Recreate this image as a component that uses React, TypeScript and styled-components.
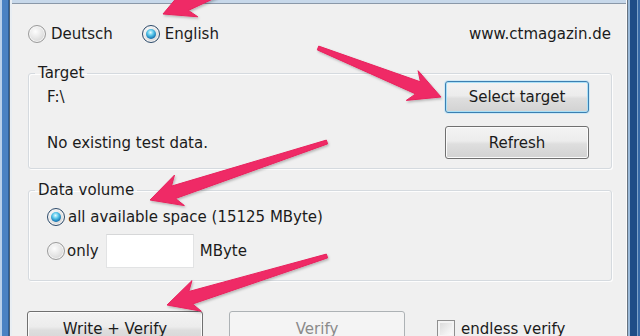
import React from "react";
import styled, { createGlobalStyle } from "styled-components";

const GlobalStyle = createGlobalStyle`
    html, body {
        margin: 0;
        padding: 0;
        background: #f0f0f0;
    }
    body {
        font-family: "DejaVu Sans", "Noto Sans", sans-serif;
        font-size: 15px;
        color: #1b1b1b;
    }
`;

// annotation arrows drawn over the dialog (Skitch style)
type Pt = [number, number];

const arrowPoints = (tail: Pt, tip: Pt, headLen = 31, headHalf = 16, w0 = 4, w1 = 13) => {
    const dx = tip[0] - tail[0];
    const dy = tip[1] - tail[1];
    const len = Math.hypot(dx, dy);
    const d = [dx / len, dy / len];
    const n = [-d[1], d[0]];
    const join = [tip[0] - d[0] * headLen * 0.8, tip[1] - d[1] * headLen * 0.8];
    const back = [tip[0] - d[0] * headLen, tip[1] - d[1] * headLen];
    const p = (b: number[], s: number) => `${(b[0] + n[0] * s).toFixed(1)},${(b[1] + n[1] * s).toFixed(1)}`;
    return [
        p(tail, w0 / 2),
        p(join, w1 / 2),
        p(back, headHalf),
        `${tip[0]},${tip[1]}`,
        p(back, -headHalf),
        p(join, -w1 / 2),
        p(tail, -w0 / 2),
    ].join(" ");
};

const arrows: { tail: Pt; tip: Pt }[] = [
    { tail: [292, -40], tip: [163, 14] },
    { tail: [318, 48], tip: [441, 97] },
    { tail: [327, 142], tip: [150, 200] },
    { tail: [327, 256], tip: [167, 305] },
];

const Stage = styled.div`
    position: relative;
    width: 640px;
    height: 336px;
    overflow: hidden;
`;

const Overlay = styled.svg`
    position: absolute;
    left: 0;
    top: 0;
    pointer-events: none;
`;

const Frame = styled.div`
    display: flex;
    height: 336px;
    background: #c7d8ea;
`;

const LeftEdge = styled.div`
    width: 12px;
    flex: none;
    background: linear-gradient(
        to right,
        #b9d0ea 0 2px,
        #4a82c3 2px 8px,
        #2d5f9a 8px 9px,
        #4f6478 9px 10px,
        #e9eef3 10px 12px
    );
`;

const RightEdge = styled.div`
    width: 14px;
    flex: none;
    background: linear-gradient(
        to right,
        #fbfbfb 0 1px,
        #66727f 1px 2px,
        #9bbad9 2px 4px,
        #1f4d87 4px 11px,
        #7fa3c9 11px 12px,
        #3769a6 12px 14px
    );
`;

const Client = styled.div`
    flex: 1;
    display: flex;
    flex-direction: column;
    margin-top: 3px;
    border-top: 1px solid #8a98a8;
    padding: 22px 14px 0 16px;
    background: #f0f0f0;
`;

const TopRow = styled.div`
    display: flex;
    align-items: center;
    height: 16px;
`;

const Choice = styled.label<{ $gap?: number; $last?: boolean }>`
    display: flex;
    align-items: center;
    gap: ${(p) => p.$gap ?? 5}px;
    margin-right: ${(p) => (p.$last ? 0 : 29)}px;
    white-space: nowrap;
`;

const Radio = styled.span<{ $on?: boolean }>`
    position: relative;
    width: 18px;
    height: 18px;
    flex: none;
    box-sizing: border-box;
    border-radius: 50%;
    border: 1px solid ${(p) => (p.$on ? "#2c4a6a" : "#9a9a9a")};
    background: radial-gradient(circle at 40% 35%, #fdfdfd 0%, #e2e2e2 55%, #c9c9c9 100%);
    box-shadow: inset 0 0 0 1px #f6f6f6;
    &::after {
        content: "";
        display: ${(p) => (p.$on ? "block" : "none")};
        position: absolute;
        left: 3px;
        top: 3px;
        width: 10px;
        height: 10px;
        border-radius: 50%;
        background: radial-gradient(circle at 45% 35%, #e4fbff 0%, #58c7ea 35%, #1a79b5 70%, #0d3f70 100%);
    }
`;

const Link = styled.span`
    margin-left: auto;
    margin-right: 1px;
`;

const Group = styled.fieldset<{ $top: number }>`
    margin: ${(p) => p.$top}px 0 0 0;
    padding: 0;
    border: 1px solid #d5dadf;
    border-radius: 3px;
    box-shadow: inset 1px 1px 0 #fdfdfd, 1px 1px 0 #fdfdfd;
    min-width: 0;
`;

const Legend = styled.legend`
    margin-left: 6px;
    padding: 0 3px;
    line-height: 16px;
`;

const TargetBody = styled.div`
    display: grid;
    grid-template-columns: 1fr 144px;
    grid-template-rows: 32px 33px;
    row-gap: 13px;
    align-items: center;
    padding: 0 22px 9px 18px;
`;

const VolumeBody = styled.div`
    display: flex;
    flex-direction: column;
    gap: 6px;
    padding: 8px 18px 12px 18px;
`;

const VolumeRow = styled.div<{ $h: number }>`
    display: flex;
    align-items: center;
    height: ${(p) => p.$h}px;
`;

const NumberBox = styled.div`
    width: 88px;
    height: 34px;
    box-sizing: border-box;
    margin: 0 6px 0 7px;
    background: #ffffff;
    border: 1px solid #e2e3e4;
    border-top-color: #d6d7d8;
`;

const Button = styled.div<{ $focus?: boolean; $disabled?: boolean; $w?: number }>`
    display: flex;
    align-items: center;
    justify-content: center;
    box-sizing: border-box;
    width: ${(p) => (p.$w ? `${p.$w}px` : "100%")};
    height: 100%;
    border-radius: 3px;
    border: 1px solid ${(p) => (p.$disabled ? "#adb2b5" : p.$focus ? "#3c7fb1" : "#707070")};
    color: ${(p) => (p.$disabled ? "#8a8a8a" : "#1b1b1b")};
    background: ${(p) =>
        p.$disabled
            ? "#f4f4f4"
            : "linear-gradient(#f3f3f3 0%, #ececec 45%, #dedede 55%, #d2d2d2 100%)"};
    box-shadow: ${(p) =>
        p.$focus
            ? "inset 0 0 0 1px #a9e0f7, 0 0 0 1px #cfe9f6"
            : p.$disabled
            ? "none"
            : "inset 0 0 0 1px #fbfbfb"};
`;

const BottomRow = styled.div`
    display: flex;
    align-items: center;
    margin-top: 30px;
    margin-left: -1px;
    height: 35px;
    flex: none;
`;

const Spacer = styled.span<{ $w: number }>`
    width: ${(p) => p.$w}px;
    flex: none;
`;

const Check = styled.span`
    width: 18px;
    height: 18px;
    box-sizing: border-box;
    border: 1px solid #8f8f8f;
    background: linear-gradient(135deg, #d6d6d6 0%, #f0f0f0 60%, #ffffff 100%);
    box-shadow: inset 0 0 0 2px #f4f4f4;
    margin: 0 6px 0 32px;
    flex: none;
`;

export default function App() {
    return (
        <>
            <GlobalStyle />
            <Stage>
                <Frame>
                    <LeftEdge />
                    <Client>
                        <TopRow>
                            <Choice>
                                <Radio />
                                Deutsch
                            </Choice>
                            <Choice>
                                <Radio $on />
                                English
                            </Choice>
                            <Link>www.ctmagazin.de</Link>
                        </TopRow>

                        <Group $top={23}>
                            <Legend>Target</Legend>
                            <TargetBody>
                                <span>F:\</span>
                                <Button $focus>Select target</Button>
                                <span>No existing test data.</span>
                                <Button>Refresh</Button>
                            </TargetBody>
                        </Group>

                        <Group $top={13}>
                            <Legend>Data volume</Legend>
                            <VolumeBody>
                                <VolumeRow $h={22}>
                                    <Choice $gap={3} $last>
                                        <Radio $on />
                                        all available space (15125 MByte)
                                    </Choice>
                                </VolumeRow>
                                <VolumeRow $h={34}>
                                    <Choice $gap={2} $last>
                                        <Radio />
                                        only
                                    </Choice>
                                    <NumberBox />
                                    <span>MByte</span>
                                </VolumeRow>
                            </VolumeBody>
                        </Group>

                        <BottomRow>
                            <Button $w={176}>Write + Verify</Button>
                            <Spacer $w={26} />
                            <Button $w={176} $disabled>
                                Verify
                            </Button>
                            <Check />
                            <span>endless verify</span>
                        </BottomRow>
                    </Client>
                    <RightEdge />
                </Frame>
                <Overlay width={640} height={336} viewBox="0 0 640 336">
                    <defs>
                        <filter id="shade" x="-20%" y="-20%" width="140%" height="140%">
                            <feDropShadow dx="1" dy="1.5" stdDeviation="1.2" floodColor="#000" floodOpacity="0.25" />
                        </filter>
                    </defs>
                    {arrows.map((a, i) => (
                        <polygon
                            key={i}
                            points={arrowPoints(a.tail, a.tip)}
                            fill="#ef2b66"
                            stroke="#e8245e"
                            strokeWidth={1}
                            strokeLinejoin="round"
                            filter="url(#shade)"
                        />
                    ))}
                </Overlay>
            </Stage>
        </>
    );
}
